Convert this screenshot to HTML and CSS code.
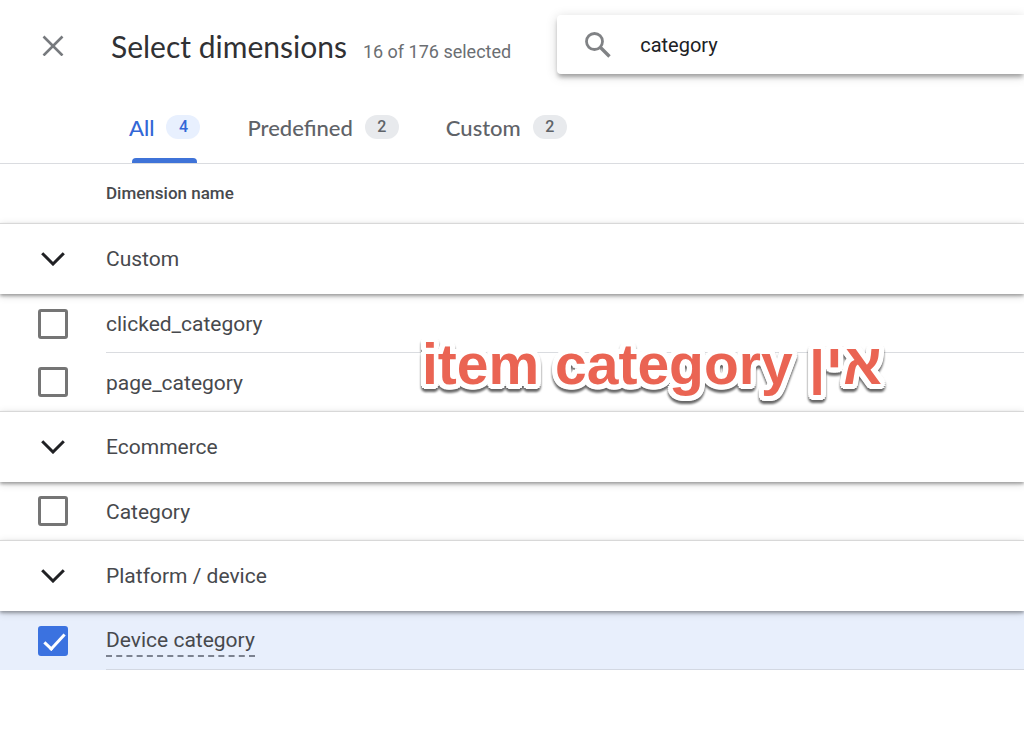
FILE: index.html
```
<!DOCTYPE html>
<html lang="en">
<head>
    <meta charset="UTF-8">
    <meta name="viewport" content="width=device-width, initial-scale=1.0">
    <title>Select dimensions</title>
    <link rel="stylesheet" href="styles.css">
</head>
<body>

<header class="header">
    <button class="btn-close" type="button" aria-label="Close">
        <svg width="22" height="22" viewBox="0 0 22 22"><path d="M1.5 2.5l19 19M20.5 2.5l-19 19" fill="none" stroke="#777a7e" stroke-width="2.6"/></svg>
    </button>
    <div class="heading">
        <h1 class="title">Select dimensions</h1>
        <span class="selected">16 of 176 selected</span>
    </div>
    <label class="search">
        <svg width="28" height="28" viewBox="0 0 28 28" fill="none" stroke="#808285"><circle cx="10.5" cy="10.5" r="8" stroke-width="2.8"/><path d="M16.5 16.5l9 9" stroke-width="3.4"/></svg>
        <input class="search-input" type="text" value="category" aria-label="Search dimensions">
    </label>
</header>

<nav class="tabs">
    <button class="tab active" type="button">All <span class="count">4</span></button>
    <button class="tab" type="button">Predefined <span class="count">2</span></button>
    <button class="tab" type="button">Custom <span class="count">2</span></button>
</nav>

<main class="list">
    <div class="column-name">Dimension name</div>

    <section>
        <button class="group" type="button" aria-expanded="true">
            <svg class="chevron" viewBox="0 0 24 14"><path d="M1.2 1.2L12 12 22.8 1.2"/></svg>
            Custom
        </button>
        <label class="row"><input class="check" type="checkbox"><span class="name">clicked_category</span></label>
        <label class="row"><input class="check" type="checkbox"><span class="name">page_category</span></label>
    </section>

    <section>
        <button class="group" type="button" aria-expanded="true">
            <svg class="chevron" viewBox="0 0 24 14"><path d="M1.2 1.2L12 12 22.8 1.2"/></svg>
            Ecommerce
        </button>
        <label class="row"><input class="check" type="checkbox"><span class="name">Category</span></label>
    </section>

    <section>
        <button class="group" type="button" aria-expanded="true">
            <svg class="chevron" viewBox="0 0 24 14"><path d="M1.2 1.2L12 12 22.8 1.2"/></svg>
            Platform / device
        </button>
        <label class="row picked"><input class="check" type="checkbox" checked><span class="name"><span class="hint">Device category</span></span></label>
    </section>

    <p class="note" dir="rtl" lang="he">אין item category</p>
</main>

</body>
</html>
```

FILE: styles.css
```
* { box-sizing: border-box; }
body { margin: 0; background: #fff; color: #47494d; font-family: Roboto, sans-serif; font-size: 21px; }
button { margin: 0; padding: 0; border: none; background: none; color: inherit; font: inherit; cursor: pointer; }
svg { display: block; flex: none; }

/* top bar */
.header { display: flex; align-items: center; padding: 15px 0 0 42px; }
.btn-close { width: 22px; height: 22px; }
.heading { display: flex; align-items: baseline; gap: 16px; margin-left: 47px; padding-top: 3px; white-space: nowrap; }
.title { margin: 0; color: #303134; font-family: Lato, sans-serif; font-size: 30px; font-weight: 400; line-height: 40px; }
.selected { color: #6b6e72; font-size: 18px; }
.search { display: flex; flex: 1; align-items: center; gap: 28px; min-width: 0; height: 59px; margin-left: 46px; padding-left: 27px; border-radius: 4px 0 0 4px; background: #fff; box-shadow: 0 4px 4px -1px rgba(0,0,0,0.3), 0 2px 12px rgba(0,0,0,0.16); }
.search-input { flex: 1; min-width: 0; padding: 0; border: none; outline: none; background: none; color: #202124; font: 20px Roboto, sans-serif; }

/* tabs */
.tabs { display: flex; gap: 47px; height: 90px; padding: 17px 0 0 129px; border-bottom: 1px solid #dadce0; }
.tab { position: relative; display: flex; align-items: center; gap: 12px; height: 72px; color: #5f6368; font-family: Lato, sans-serif; font-size: 22px; font-weight: 500; }
.count { width: 34px; border-radius: 12px; background: #e8eaed; font-family: Roboto, sans-serif; font-size: 16px; line-height: 24px; text-align: center; }
.tab.active { color: #3367d6; }
.tab.active .count { background: #e8f0fe; }
.tab.active::after { content: ""; position: absolute; left: 3px; right: 3px; bottom: 0; height: 5px; border-radius: 4px 4px 0 0; background: #3f73d8; }

/* dimension list */
.list { position: relative; }
.column-name { padding-left: 106px; font-size: 17px; font-weight: 500; line-height: 59px; }
.group { position: relative; z-index: 1; display: flex; align-items: center; gap: 41px; width: 100%; height: 71px; padding-left: 41px; border-top: 1px solid #d8d8d8; background: #fff; text-align: left; box-shadow: 0 2px 3px rgba(0,0,0,0.3), 0 2px 8px rgba(0,0,0,0.16); }
.chevron { width: 24px; height: 14px; fill: none; stroke: #202124; stroke-width: 3; }
.row { display: flex; align-items: center; gap: 38px; height: 59px; padding-left: 38px; }
.row:last-child { height: 58px; }
.name { display: flex; flex: 1; align-items: center; height: 100%; padding-top: 2px; border-bottom: 1px solid #dadce0; }
.row:last-child .name { border-bottom: none; }
.check { flex: none; appearance: none; width: 30px; height: 30px; margin: 0; border: 3px solid #757575; border-radius: 3px; }
.check:checked { position: relative; border-color: #3b72e0; background: #3b72e0; }
.check:checked::after { content: ""; position: absolute; left: 8px; top: 0; width: 8px; height: 18px; border: solid #fff; border-width: 0 3px 3px 0; transform: rotate(43deg); }
.row.picked { height: 59px; background: #e8effc; }
.row.picked .name { border-bottom: 1px solid #d3d8e2; }
.hint { border-bottom: 2px dashed #7c8290; line-height: 30px; }

/* marker over the list, white ring with rounded corners */
.note {
    position: absolute; z-index: 2; top: 168px; left: 422px; margin: 0;
    color: #ea6453; font-family: "Liberation Sans", sans-serif; font-size: 57px; font-weight: 700; line-height: 64px; white-space: nowrap;
    text-shadow: 5px 0 #fff, -5px 0 #fff, 0 5px #fff, 0 -5px #fff, 4px 4px #fff, -4px 4px #fff, 4px -4px #fff, -4px -4px #fff, 5px 2px #fff, -5px 2px #fff, 5px -2px #fff, -5px -2px #fff, 2px 5px #fff, -2px 5px #fff, 2px -5px #fff, -2px -5px #fff, 2px 2px #fff, -2px 2px #fff, 2px -2px #fff, -2px -2px #fff;
    filter: drop-shadow(0 3px 1px rgba(0,0,0,0.6));
}
```
